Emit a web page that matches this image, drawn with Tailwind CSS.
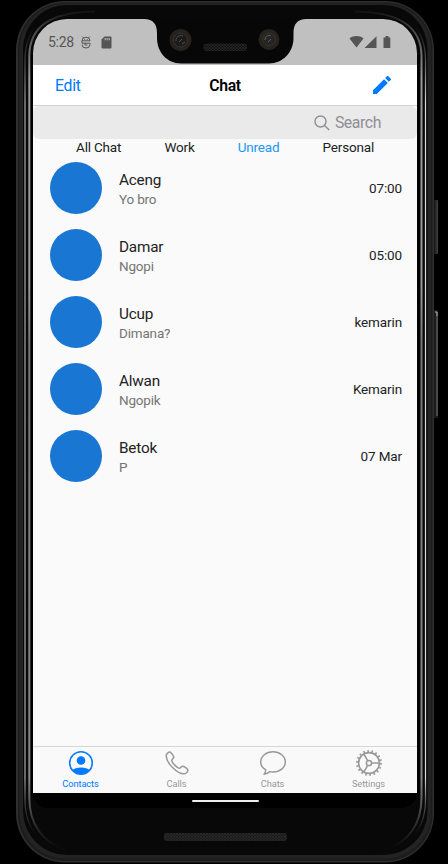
<!DOCTYPE html>
<html lang="en">
<head>
<meta charset="utf-8">
<title>Chat</title>
<script src="https://cdn.jsdelivr.net/npm/@tailwindcss/browser@4"></script>
</head>
<body class="bg-black">
<div class="relative h-[864px] w-[448px] overflow-hidden bg-black pt-[19px] pl-[33px] font-['Roboto','Liberation_Sans',sans-serif]">
  <!-- Phone body -->
  <svg class="absolute inset-0" width="448" height="864" viewBox="0 0 448 864" fill="none">
    <defs>
      <linearGradient id="shine" x1="0" y1="0" x2="0" y2="864" gradientUnits="userSpaceOnUse">
        <stop offset="0.012" stop-color="#111"/><stop offset="0.035" stop-color="#444"/><stop offset="0.09" stop-color="#999"/><stop offset="0.33" stop-color="#999"/><stop offset="0.4" stop-color="#777"/><stop offset="0.9" stop-color="#888"/><stop offset="0.95" stop-color="#333"/><stop offset="0.98" stop-color="#0a0a0a"/>
      </linearGradient>
      <linearGradient id="shine2" x1="0" y1="0" x2="0" y2="864" gradientUnits="userSpaceOnUse">
        <stop offset="0.03" stop-color="#0a0a0a"/><stop offset="0.07" stop-color="#555"/><stop offset="0.12" stop-color="#ddd"/><stop offset="0.9" stop-color="#ddd"/><stop offset="0.93" stop-color="#555"/><stop offset="0.965" stop-color="#0a0a0a"/>
      </linearGradient>
      <linearGradient id="key" x1="434" y1="0" x2="438" y2="0" gradientUnits="userSpaceOnUse">
        <stop stop-color="#111"/><stop offset="0.5" stop-color="#2a2a2a"/><stop offset="1" stop-color="#444"/>
      </linearGradient>
      <pattern id="mesh" width="3" height="3" patternUnits="userSpaceOnUse">
        <path d="M0 0l3 3M3 0L0 3" stroke="#2b2b2b" stroke-width=".7"/>
      </pattern>
    </defs>
    <rect x="432" y="200" width="6" height="54" rx="1" fill="url(#key)"/>
    <rect x="432" y="310" width="6" height="108" rx="1" fill="#1c1c1c"/>
    <path d="M437 312v104" stroke="#777"/>
    <path d="M435 312h2v4" stroke="#aaa"/>
    <rect x="16" y="1" width="418" height="861.500" rx="49" fill="#2e2e2e"/>
    <rect x="18" y="2.500" width="414.500" height="858.500" rx="47" fill="#1c1c1c"/>
    <rect x="19.500" y="3.500" width="411.500" height="855" rx="46" fill="#232323"/>
    <rect x="23" y="5" width="404.500" height="850" rx="44" fill="#080808"/>
    <path d="M25 800V60C25 29 45 7 78 6.500M25 800c0 32 21 53 50 54" stroke="url(#shine2)" stroke-width="1.200" opacity=".75"/>
    <path d="M425.500 800V60c0-31-20-53-53-53.500M425.500 800c0 32-21 53-50 54" stroke="url(#shine2)" stroke-width="1.200"/>
    <path d="M29.300 798V55C30 28 48 12 95 11.500M29.300 798c0 26 13 44 36 52" stroke="url(#shine)" stroke-width="2"/>
    <path d="M421.500 798V55C420.800 28 402 12 355 11.500M421.500 798c0 26-13 44-36 52" stroke="url(#shine)" stroke-width="2"/>
    <path d="M32 55v740M418.700 55v740" stroke="#000" stroke-width="2"/>
    <rect x="33" y="740" width="384" height="68" rx="16" fill="#000"/>
    <rect x="164" y="833" width="123" height="8" rx="3" fill="#1b1b1b"/>
    <rect x="164" y="833" width="123" height="8" rx="3" fill="url(#mesh)"/>
  </svg>

  <div class="relative flex h-[789px] w-[384px] flex-col overflow-hidden rounded-t-[34px] rounded-b-[16px] bg-black">
    <!-- Status bar -->
    <div class="flex h-[46px] shrink-0 items-center justify-between bg-[#c0c0c0] pr-[26px] pl-[15px] text-[#555]">
      <div class="flex items-center">
        <span class="w-[26px] text-[14px] leading-none tracking-[-0.3px]">5:28</span>
        <svg class="ml-[7px]" width="10" height="13" viewBox="0 0 10 13" fill="none" stroke="currentColor" stroke-width="1">
          <path d="M1 4.800a4 3.600 0 0 1 8 0zM1.300.6l1.300 1.300M8.700.6L7.400 1.900M1 4.800v2.400h8v1.300a4 3.500 0 0 1-8 0M4 7.200v1.800h2.300"/><path d="M3.300 3.400h.9M5.800 3.400h.9"/>
        </svg>
        <svg class="ml-[10px]" width="11" height="13" viewBox="0 0 11 13">
          <path d="M3.500.5H9.500a1 1 0 0 1 1 1v10a1 1 0 0 1-1 1h-8a1 1 0 0 1-1-1V3.500z" fill="currentColor"/><path d="M4.200 2v2.300M6.200 2v2.300M8.200 2v2.300" stroke="#c0c0c0"/>
        </svg>
      </div>
      <svg width="42" height="14" viewBox="0 0 42 14" fill="currentColor">
        <path d="M.5 3.500C4.500.3 10.500.3 14.500 3.500L7.500 12.500zM27.500 1.200V13H15.500zM34.500 2.500h2V1h3v1.500h1.800V13h-6.800z"/>
      </svg>
    </div>
    <!-- Navigation bar -->
    <div class="grid h-[41px] shrink-0 grid-cols-3 items-center border-b border-[#d2d2d2] bg-white pr-[24px] pl-[22px] text-[15.8px]">
      <span class="pt-[2px] tracking-[-0.3px] text-[#007aff]">Edit</span>
      <span class="pt-[2px] pl-[2px] text-center font-semibold tracking-[-0.4px] text-black">Chat</span>
      <svg class="mr-[2px] justify-self-end" width="18" height="18" viewBox="3 3 18 18" fill="#007aff"><path d="M3 17.250V21h3.750L17.810 9.940l-3.750-3.750L3 17.250zM20.710 7.040a1 1 0 0 0 0-1.410l-2.340-2.340a1 1 0 0 0-1.410 0l-1.830 1.830 3.750 3.750 1.830-1.830z"/></svg>
    </div>
    <main class="flex min-h-0 flex-1 flex-col bg-[#fafafa] text-[#222]">
      <div class="flex h-[33px] shrink-0 items-center justify-end gap-[5px] rounded-[6px] bg-[#eaeaea] pr-[36px] text-[15.8px] text-[#8e8e93]">
        <svg width="16" height="16" viewBox="0 0 16 16" fill="none" stroke="currentColor" stroke-width="1.400"><circle cx="6.500" cy="6.500" r="5.500"/><path d="M10.500 10.500l4.700 4.500"/></svg>
        <span class="tracking-[-0.4px]">Search</span>
      </div>
      <div class="flex h-[17px] shrink-0 items-center justify-between pr-[43px] pl-[43px] text-[13.5px] leading-[17px] tracking-[-0.18px]">
        <span>All Chat</span><span>Work</span><span class="text-[#2196f3]">Unread</span><span>Personal</span>
      </div>
      <div id="chats" class="mt-[-1.5px] flex-1"></div>
    </main>
    <!-- Tab bar -->
    <nav class="grid h-[47px] shrink-0 grid-cols-4 border-t border-[#d6d6d6] bg-[#f9f9f9] text-[9.300px] leading-[11px] text-[#999]">
      <div class="flex flex-col items-center gap-px pt-[2px] text-[#007aff]">
        <svg width="28" height="28" viewBox="0 0 28 28" fill="none"><circle cx="14" cy="14" r="11.300" stroke="currentColor" stroke-width="1.500"/><circle cx="14" cy="11.500" r="4.300" fill="currentColor"/><path d="M5.500 21C8 17.500 20 17.500 22.500 21 18 26.500 10 26.500 5.500 21z" fill="currentColor"/></svg>
        <span class="pr-px tracking-[-0.1px]">Contacts</span>
      </div>
      <div class="flex flex-col items-center gap-px pt-[2px]">
        <svg width="28" height="28" viewBox="0 0 28 28" fill="none" stroke="currentColor" stroke-width="1.500" stroke-linejoin="round"><path d="M3.200 7C3 5.500 5 3.300 6.500 3c1.500-.2 3.800 3.500 4.200 4.800.5 1.700-2.200 2.500-2 3.800.4 2.300 5.200 7.200 7.600 7.600 1.400.2 2-2.400 3.700-2 1.300.3 5 2.700 4.900 4.200-.1 1.600-2.300 3.400-4 3.400C14.500 24.800 3.500 14.500 3.200 7z"/></svg>
        <span class="pr-px tracking-[-0.1px]">Calls</span>
      </div>
      <div class="flex flex-col items-center gap-px pt-[2px]">
        <svg width="28" height="28" viewBox="0 0 28 28" fill="none" stroke="currentColor" stroke-width="1.500" stroke-linejoin="round"><path d="M14 2.800c6.900 0 12.300 4.500 12.300 10.200S20.900 23 14 23c-1.200 0-2.200-.1-3.200-.4C9.500 24 7.500 25.300 5 25.300c1.200-1.200 1.800-2.800 1.700-4.600C3.500 18.900 1.700 16.200 1.700 13 1.700 7.300 7.100 2.800 14 2.800z"/></svg>
        <span class="pr-px tracking-[-0.1px]">Chats</span>
      </div>
      <div class="flex flex-col items-center gap-px pt-[2px]">
        <svg width="28" height="28" viewBox="0 0 28 28" fill="none" stroke="currentColor"><circle cx="14" cy="14" r="10.400" stroke-width="1.600"/><circle cx="14" cy="14" r="12" stroke-width="2" stroke-dasharray="1.600 2.589"/><circle cx="14" cy="14" r="2.600" stroke-width="1.500"/><path d="M16.600 14h7.800M12.700 11.700L8.800 5M12.700 16.300L8.800 23" stroke-width="1.500"/></svg>
        <span class="pr-px tracking-[-0.1px]">Settings</span>
      </div>
    </nav>
    <div class="flex h-[15px] shrink-0 items-center justify-center bg-black"><div class="h-[2px] w-[67px] rounded-full bg-[#eee]"></div></div>
  </div>

  <!-- Notch with cameras and earpiece -->
  <svg class="absolute top-[18px] left-[140px]" width="170" height="50" viewBox="140 18 170 50" fill="none">
    <path d="M140 18v1h4c9 0 13 5 13 14v5c0 14 10 25.500 24 25.500h88c14 0 24.500-11.500 24.500-25.500v-5c0-9 4-14 13-14h3.500v-1z" fill="#070707"/>
    <circle cx="180.500" cy="40" r="11" fill="#28221c"/><circle cx="180.500" cy="40" r="7" fill="#1b1b1b" stroke="#38332f"/>
    <path d="M176 41a5 5 0 0 1 7-5M179 42l3-3M182 44l3-2" stroke="#54504e"/>
    <circle cx="269" cy="39.500" r="10.500" fill="#28221c"/><circle cx="269" cy="39.500" r="6.500" fill="#242524" stroke="#35322f"/>
    <path d="M265 40a4 4 0 0 1 6-4M268 42l3-3" stroke="#5a5d5c"/>
    <rect x="203.500" y="43.500" width="43.500" height="7.500" rx="3" fill="#111"/><rect x="203.500" y="43.500" width="43.500" height="7.500" rx="3" fill="url(#mesh)"/>
  </svg>
</div>
<script>
  const chats = [['Aceng','Yo bro','07:00'],['Damar','Ngopi','05:00'],['Ucup','Dimana?','kemarin'],['Alwan','Ngopik','Kemarin'],['Betok','P','07 Mar']];
  document.getElementById('chats').innerHTML = chats.map(([name, text, time]) => `
    <div class="flex h-[67.1px] items-center pr-[15px] pl-[17px]">
      <div class="size-[52px] shrink-0 rounded-full bg-[#1976d2]"></div>
      <div class="ml-[17px] flex flex-1 flex-col pt-px">
        <span class="pt-px text-[15.3px] leading-[19px] tracking-[-0.2px]">${name}</span>
        <span class="text-[13.5px] leading-[18px] tracking-[-0.18px] text-[#757575]">${text}</span>
      </div>
      <span class="text-[13.5px] tracking-[-0.12px]">${time}</span>
    </div>`).join('');
</script>
</body>
</html>
